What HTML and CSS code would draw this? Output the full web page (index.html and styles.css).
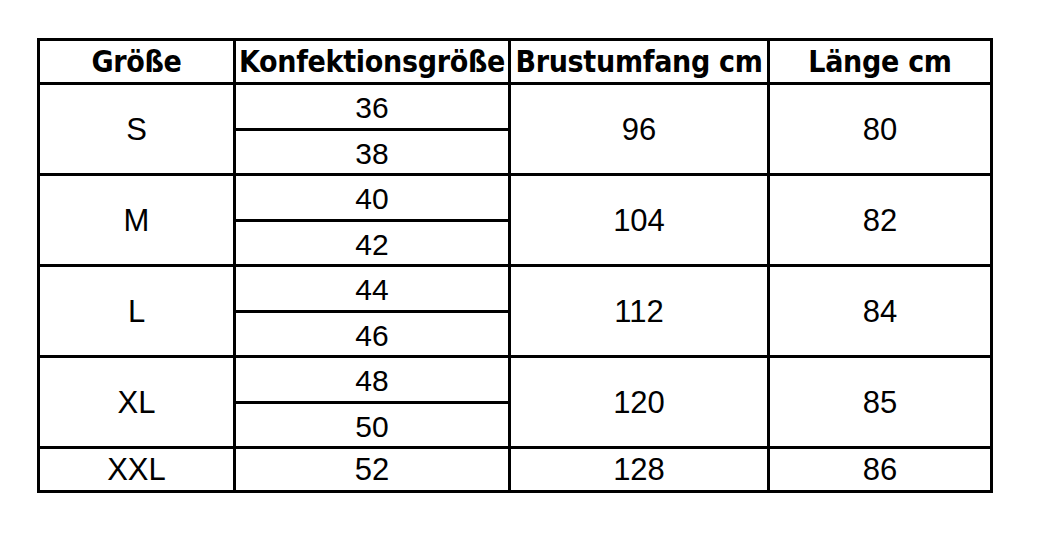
FILE: index.html
```html
<!DOCTYPE html>
<html lang="de">
<head>
<meta charset="utf-8">
<title>Größentabelle</title>
<link rel="stylesheet" href="styles.css">
</head>
<body>
<div class="page">
<table class="sizes">
  <colgroup>
    <col class="c1"><col class="c2"><col class="c3"><col class="c4">
  </colgroup>
  <thead>
    <tr class="head">
      <th>Größe</th><th>Konfektionsgröße</th><th>Brustumfang cm</th><th>Länge cm</th>
    </tr>
  </thead>
  <tbody>
    <tr class="half"><td rowspan="2">S</td><td class="sub">36</td><td rowspan="2">96</td><td rowspan="2">80</td></tr>
    <tr class="half"><td class="sub">38</td></tr>
    <tr class="half"><td rowspan="2">M</td><td class="sub">40</td><td rowspan="2">104</td><td rowspan="2">82</td></tr>
    <tr class="half"><td class="sub">42</td></tr>
    <tr class="half"><td rowspan="2">L</td><td class="sub">44</td><td rowspan="2">112</td><td rowspan="2">84</td></tr>
    <tr class="half"><td class="sub">46</td></tr>
    <tr class="half"><td rowspan="2">XL</td><td class="sub">48</td><td rowspan="2">120</td><td rowspan="2">85</td></tr>
    <tr class="half"><td class="sub">50</td></tr>
    <tr class="single"><td>XXL</td><td>52</td><td>128</td><td>86</td></tr>
  </tbody>
</table>
</div>
</body>
</html>
```
FILE: styles.css
```css
html, body {
  margin: 0;
  padding: 0;
  background: #ffffff;
}
.page {
  padding: 38px 0 0 37px;
}
.sizes {
  border-collapse: collapse;
  table-layout: fixed;
  width: 956px;
  font-family: "Liberation Sans", Arial, sans-serif;
  color: #000;
}
.c1 { width: 196px; }
.c2 { width: 275px; }
.c3 { width: 259px; }
.c4 { width: 223px; }
.sizes th, .sizes td {
  border: 3px solid #000;
  padding: 0;
  text-align: center;
  vertical-align: middle;
  white-space: nowrap;
  line-height: 1;
}
.sizes th {
  font-family: "DejaVu Sans Condensed", "Liberation Sans", sans-serif;
  font-weight: 700;
  font-size: 30px;
  letter-spacing: -0.3px;
}
.sizes td {
  font-size: 31px;
  font-weight: 400;
}
.sizes td.sub {
  font-size: 30px;
  padding-top: 4px;
}
.head { height: 44px; }
.half { height: 45.5px; }
.single { height: 44px; }
```
